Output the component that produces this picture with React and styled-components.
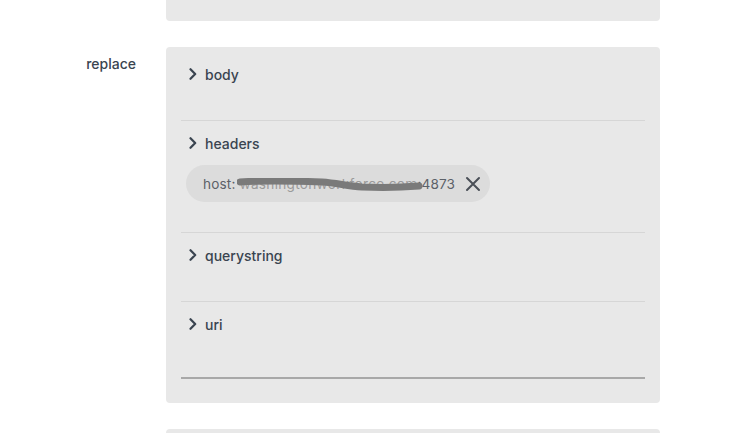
import React from "react";
import styled, { createGlobalStyle } from "styled-components";

const GlobalStyle = createGlobalStyle`
  body {
    margin: 0;
    background: #ffffff;
    font-family: Inter, "Open Sans", sans-serif;
    color: #3a4450;
    overflow: hidden;
  }
`;

const sections = [
  { name: "body", chips: [] },
  { name: "headers", chips: [{ key: "host", value: "washingtonworkforce.com", port: "4873" }] },
  { name: "querystring", chips: [] },
  { name: "uri", chips: [], last: true },
];

const Chevron = () => (
  <svg width="10" height="12" viewBox="0 0 10 12" fill="none">
    <path d="M2.5 1.2 L7.2 6 L2.5 10.8" stroke="#3a4450" strokeWidth="2.2" strokeLinecap="round" strokeLinejoin="round" />
  </svg>
);

const CloseIcon = () => (
  <svg width="16" height="16" viewBox="0 0 16 16" fill="none">
    <path d="M2 2 L14 14 M14 2 L2 14" stroke="#4a4f57" strokeWidth="2" strokeLinecap="round" />
  </svg>
);

const Scribble = () => (
  <ScribbleSvg width="186" height="14" viewBox="0 0 186 14" fill="none">
    <path
      d="M3 4 C30 2 60 3 85 4 C100 5 110 8 125 9 C150 10 170 9 182 8"
      stroke="#7a7a7a"
      strokeWidth="7"
      strokeLinecap="round"
    />
  </ScribbleSvg>
);

export default function App() {
  return (
    <Page>
      <GlobalStyle />
      <FieldRow>
        <Label />
        <Card $short />
      </FieldRow>
      <FieldRow>
        <Label>replace</Label>
        <Card>
          {sections.map((s) => (
            <Section key={s.name} $last={s.last}>
              <SectionTitle>
                <Chevron />
                <span>{s.name}</span>
              </SectionTitle>
              <SectionBody $filled={s.chips.length > 0}>
                {s.chips.map((c) => (
                  <Chip key={c.key}>
                    <ChipText>
                      {c.key}: <Redacted>{c.value}<Scribble /></Redacted>:{c.port}
                    </ChipText>
                    <ChipClose>
                      <CloseIcon />
                    </ChipClose>
                  </Chip>
                ))}
              </SectionBody>
            </Section>
          ))}
          <BottomRule />
        </Card>
      </FieldRow>
      <FieldRow>
        <Label />
        <Card $stub />
      </FieldRow>
    </Page>
  );
}

const Page = styled.div`
  width: 735px;
  height: 463px;
  overflow: hidden;
  display: flex;
  flex-direction: column;
  gap: 26px;
  margin-top: -30px;
`;

const FieldRow = styled.div`
  display: flex;
  align-items: flex-start;
`;

const Label = styled.div`
  width: 136px;
  flex-shrink: 0;
  text-align: right;
  padding-top: 8px;
  font-size: 14px;
  font-weight: 500;
  color: #3a4450;
`;

const Card = styled.div`
  margin-left: 30px;
  width: 494px;
  background: #e8e8e8;
  border-radius: 4px;
  padding: 5px 15px 24px;
  box-sizing: border-box;
  flex-shrink: 0;
  ${(p) => p.$short && "height: 51px;"}
  ${(p) => p.$stub && "height: 40px;"}
`;

const Section = styled.div`
  padding-top: 13px;
  min-height: ${(p) => (p.$last ? "75px" : "auto")};
  box-sizing: border-box;
  border-bottom: ${(p) => (p.$last ? "none" : "1px solid #d6d6d6")};
`;

const SectionTitle = styled.div`
  display: flex;
  align-items: center;
  gap: 7px;
  height: 18px;
  padding-left: 7px;
  font-size: 14px;
  font-weight: 500;
  color: #3a4450;
`;

const SectionBody = styled.div`
  padding: ${(p) => (p.$filled ? "13px 0 30px 5px" : "0")};
  min-height: 37px;
`;

const Chip = styled.div`
  display: inline-flex;
  align-items: center;
  gap: 8px;
  height: 37px;
  padding: 0 7px 0 17px;
  background: #dcdcdc;
  border-radius: 19px;
  box-sizing: border-box;
`;

const ChipText = styled.span`
  font-size: 13.6px;
  color: #5c6168;
  white-space: nowrap;
  letter-spacing: 0.15px;
`;

const Redacted = styled.span`
  position: relative;
  color: #9a9a9a;
  letter-spacing: 0.3px;
`;

const ScribbleSvg = styled.svg`
  position: absolute;
  left: -2px;
  top: 2px;
`;

const ChipClose = styled.span`
  display: flex;
  align-items: center;
  justify-content: center;
  width: 20px;
  height: 20px;
`;

const BottomRule = styled.div`
  height: 2px;
  background: #a8a8a8;
`;
